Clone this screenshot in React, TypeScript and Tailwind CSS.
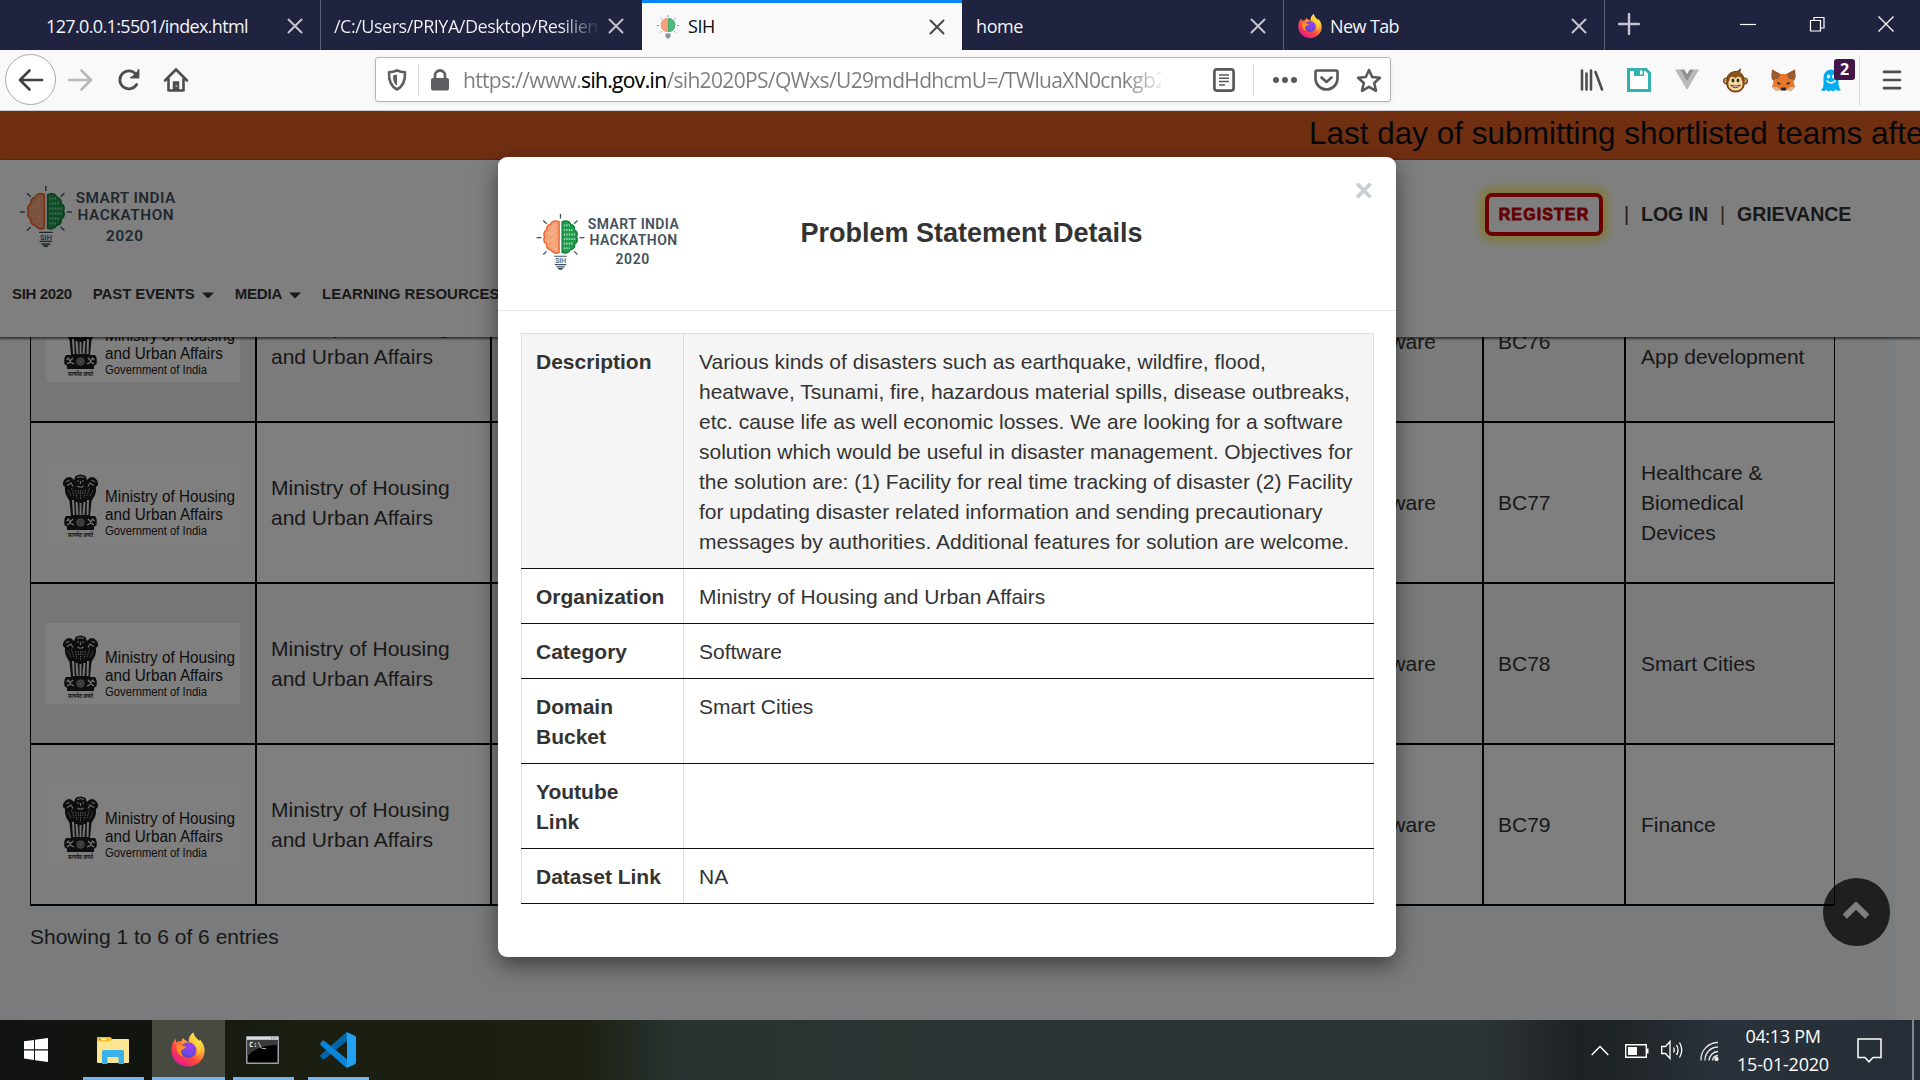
import React from "react";

const ui = "font-['Open_Sans','Noto_Sans',sans-serif]";
const arial = "font-['Liberation_Sans',Arial,sans-serif]";

function SihLogo({ className }: { className?: string }) {
  const rays = [
    "M1.7 27H7", "M48.7 27H54", "M27.8 1V6", "M9 8.3L12.7 11.8", "M46.4 8.3L42.7 11.8",
    "M9 45.4L12.7 42", "M46.4 45.4L42.7 42",
  ];
  return (
    <svg viewBox="0 0 158 64" className={className}>
      <path d="M26.3 9.6C22 7.6 18 9.2 17 12.4C13.5 13 12.3 16 13 18.4C9.6 20 9 23.6 10.6 26C8.8 29 9.8 32.6 12.6 34C12.4 37.8 14.6 40 17.4 40.4C19 43.6 23 44.8 26.3 43.2Z" fill="#f5a379" stroke="#ec6a35" strokeWidth="1.7" />
      <path d="M23 13L19 17L22 20L16 25M23 24L18 30L22 34L18 37M14 21L17 22M13 30L16 32M23 38V41" stroke="#fbd0b6" strokeWidth=".7" fill="none" />
      <path d="M29.6 9.6C34 7.6 38 9.2 39 12.4C42.5 13 43.7 16 43 18.4C46.4 20 47 23.6 45.4 26C47.2 29 46.2 32.6 43.4 34C43.6 37.8 41.4 40 38.6 40.4C37 43.6 33 44.8 29.6 43.2Z" fill="#1f9a4c" stroke="#14813a" strokeWidth="1.5" />
      <path d="M31.500 13.500H38M31.500 18.500H42M31.500 23.500H44M31.500 28.500H44M31.500 33.500H42M31.500 38.500H38" stroke="#a5dcb8" strokeWidth="2.200" strokeDasharray="1.400 1.300" />
      {rays.map((d) => (
        <path key={d} d={d} stroke="#3f525e" strokeWidth="1.400" />
      ))}
      <path d="M21 47.3H34.8M21.6 56.4H34M23.4 59H32.4" stroke="#3f525e" strokeWidth="1.3" />
      <path d="M24.6 60.2H31L29.4 62H26.2Z" fill="#3f525e" />
      <text x="22" y="55" fontFamily="Roboto" fontSize="8" fontWeight="500" fill="#3f525e" textLength="12" lengthAdjust="spacingAndGlyphs">SIH</text>
      <g fontFamily="Roboto" fontWeight="600" fill="#3f525e">
        <text x="57.800" y="17.800" fontSize="15.300" textLength="99.400" lengthAdjust="spacing">SMART INDIA</text>
        <text x="59.600" y="35" fontSize="15.300" textLength="96" lengthAdjust="spacing">HACKATHON</text>
        <text x="88" y="56" fontSize="15.300" textLength="37" lengthAdjust="spacing">2020</text>
      </g>
    </svg>
  );
}

function Bulb() {
  return (
    <svg viewBox="0 0 22 24" className="h-6 w-[22px]">
      <path d="M10.4 3.5C6 3.5 4 7 4.2 10.5C4.3 14 7 16.6 10.4 16.8Z" fill="#f6a27a" stroke="#ee9a70" />
      <path d="M11.6 3.5C16 3.5 18 7 17.8 10.5C17.7 14 15 16.6 11.6 16.8Z" fill="#4fbb7e" stroke="#38a868" />
      <path d="M8.5 18.5H13.5V21.5L12 23.4H10L8.5 21.5Z" fill="#8694a0" />
      <path d="M11 0V2M0 10.5H2M20 10.5H22M3.4 3L4.8 4.4M18.6 3L17.2 4.4M3.4 17.6L4.8 16.2M18.6 17.6L17.2 16.2" stroke="#8a969e" />
    </svg>
  );
}

function Firefox({ className, id }: { className?: string; id: string }) {
  return (
    <svg viewBox="0 0 34 34" className={className}>
      <defs>
        <linearGradient id={id + "a"} x1=".85" y1=".1" x2=".25" y2=".95">
          <stop offset="0" stopColor="#fff44f" />
          <stop offset=".35" stopColor="#ffa436" />
          <stop offset=".65" stopColor="#ff4a3c" />
          <stop offset="1" stopColor="#e5188e" />
        </linearGradient>
        <radialGradient id={id + "b"} cx=".6" cy=".3" r=".8">
          <stop offset="0" stopColor="#a23af5" />
          <stop offset=".6" stopColor="#6b4be0" />
          <stop offset="1" stopColor="#4a3fb8" />
        </radialGradient>
        <linearGradient id={id + "c"} x1="1" y1="0" x2="0" y2="1">
          <stop offset="0" stopColor="#fff24a" />
          <stop offset="1" stopColor="#ffb02e" stopOpacity=".2" />
        </linearGradient>
      </defs>
      <path d="M4.8 6C4.6 7.6 4.8 8.8 5.4 10C6.8 8.8 8.5 8.6 10.5 8.8L11.5 5.6C13.5 7.4 16 9 18 9.6C17 6 19.5 2 22.5 0C22.7 4 26 6 28.2 8.6L29 7C32 10.5 34 14.6 33.6 19C33 27.6 26 34 17 34C8 34 .8 27.5 .4 18.5C.2 13.5 2 9 4.8 6Z" fill={"url(#" + id + "a)"} />
      <circle cx="17.5" cy="17.6" r="7.8" fill={"url(#" + id + "b)"} />
      <path d="M5.5 13C9.5 11.6 12 14.4 15.6 14C14.6 16 11.5 16.4 10.2 18.2C9.6 20.5 11 23 12.4 24C8 23 5.2 18.5 5.5 13Z" fill="#ff9326" />
      <path d="M18 9.6C17 6 19.5 2 22.5 0C22.7 4 26 6 28.2 8.6C31 13 30.5 20 26 24C27.5 18 25 12 18 9.6Z" fill={"url(#" + id + "c)"} />
    </svg>
  );
}

function X({ color = "#c3c4ce", size = 16, w = 2 }: { color?: string; size?: number; w?: number }) {
  return (
    <svg width={size} height={size} viewBox="0 0 16 16" className="shrink-0">
      <path d="M1.5 1.5L14.5 14.5M14.5 1.5L1.5 14.5" stroke={color} strokeWidth={w} strokeLinecap="round" />
    </svg>
  );
}

function TabBar() {
  return (
    <div className={"flex h-[50px] shrink-0 bg-[#20233f] text-[18px] text-[#f4f4f8] " + ui}>
      <div className="flex w-[321px] items-center border-r border-[#5d5f78] pr-[17px] pl-[46px] pt-[2px]">
        <span className="flex-1 whitespace-nowrap tracking-[-0.64px]">127.0.0.1:5501/index.html</span>
        <X />
      </div>
      <div className="flex w-[321px] items-center pr-[18px] pl-[13px] pt-[2px]">
        <span className="mr-[7px] flex-1 overflow-hidden bg-gradient-to-r from-[#f4f4f8] from-85% to-[#20233f] bg-clip-text whitespace-nowrap tracking-[-0.48px] text-transparent">
          /C:/Users/PRIYA/Desktop/Resilien
        </span>
        <X />
      </div>
      <div className="flex w-80 items-center border-t-[3px] border-[#0a84ff] bg-[#f9f9fa] pr-[17px] pl-[15px] text-[#0c0c0d]">
        <Bulb />
        <span className="ml-[9px] flex-1 tracking-[-0.4px]">SIH</span>
        <X color="#48484a" />
      </div>
      <div className="flex w-[322px] items-center border-r border-[#5d5f78] pr-[17px] pl-[14px] pt-[2px]">
        <span className="flex-1 tracking-[-0.4px]">home</span>
        <X />
      </div>
      <div className="flex w-[321px] items-center border-r border-[#5d5f78] pr-[17px] pl-[14px] pt-[2px]">
        <Firefox id="ft" className="h-6 w-6" />
        <span className="ml-[8px] flex-1 tracking-[-0.6px]">New Tab</span>
        <X />
      </div>
      <div className="flex flex-1 items-center pb-[2px] pl-[13px]">
        <svg width="22" height="22" viewBox="0 0 22 22">
          <path d="M11 1V21M1 11H21" stroke="#c3c4ce" strokeWidth="2.4" strokeLinecap="round" />
        </svg>
        <svg width="16" height="16" viewBox="0 0 16 16" className="ml-[100px]">
          <path d="M0 8.5H16" stroke="#fff" strokeWidth="1.2" />
        </svg>
        <svg width="16" height="16" viewBox="0 0 16 16" className="ml-[53px]">
          <path d="M1.5 4.5H11.5V15H1.5ZM5 4.5V1.5H15V12H11.5" stroke="#fff" fill="none" strokeWidth="1.2" />
        </svg>
        <svg width="16" height="16" viewBox="0 0 16 16" className="ml-[53px]">
          <path d="M.5 .5L15.5 15.5M15.5 .5L.5 15.5" stroke="#fff" strokeWidth="1.3" />
        </svg>
      </div>
    </div>
  );
}

const gray = "#4e4e50";
function Toolbar() {
  return (
    <div className={"flex h-[61px] shrink-0 items-center border-b border-[#ccc] bg-[#f9f9fa] " + ui}>
      <div className="mb-px ml-[5px] flex h-[51px] w-[51px] items-center justify-center rounded-full border border-[#aaa] bg-white">
        <svg width="26" height="24" viewBox="0 0 26 24" fill="none" stroke="#3f3f41" strokeWidth="2.600" strokeLinecap="round" strokeLinejoin="round">
          <path d="M2 12H24M11.5 2.5L2 12L11.5 21.500" />
        </svg>
      </div>
      <svg width="26" height="24" viewBox="0 0 26 24" fill="none" stroke="#b8b8ba" strokeWidth="2.6" strokeLinecap="round" strokeLinejoin="round" className="mb-px ml-[11px]">
        <path d="M2 12H24M14.500 2.500L24 12L14.500 21.500" />
      </svg>
      <svg width="24" height="24" viewBox="0 0 24 24" fill="none" stroke={gray} strokeWidth="2.8" strokeLinecap="round" className="mb-px ml-[24px]">
        <path d="M19.600 16.500A9 9 0 1 1 18.500 5.800" />
        <path d="M21.500 2V9.500H14" strokeLinejoin="round" fill={gray} strokeWidth="1.800" />
      </svg>
      <svg width="26" height="26" viewBox="0 0 26 26" fill="none" stroke={gray} strokeWidth="2.600" strokeLinecap="round" strokeLinejoin="round" className="mb-px ml-[22px]">
        <path d="M2 13.500L13 2.500L24 13.500M5.500 12V23.500H20.500V12" />
        <path d="M10.500 23V15H15.500V23" fill={gray} strokeWidth="1.500" />
        <path d="M13 19H14" stroke="#f9f9fa" strokeWidth="1" />
      </svg>
      <div className="mb-px ml-[186px] flex h-[45px] w-[1016px] items-center rounded-[3px] border border-[#b5b5b8] bg-white pt-px shadow-[0_1px_4px_rgba(0,0,0,0.08)]">
        <svg width="20" height="22" viewBox="0 0 20 22" className="ml-[11px]">
          <path d="M10 1.500C7 2.800 4.500 3.200 2 3.200C1.700 11 3 17 10 20.500C17 17 18.300 11 18 3.200C15.500 3.200 13 2.800 10 1.500Z" fill="none" stroke="#5f5f61" strokeWidth="2.600" strokeLinejoin="round" />
          <path d="M10 5.500C8.500 6 7.300 6.300 6 6.400C6 11 6.800 14.300 10 16.500Z" fill="#5f5f61" />
        </svg>
        <div className="ml-[11px] h-8 w-px bg-[#dcdcde]" />
        <svg width="20" height="22" viewBox="0 0 20 22" className="ml-[11px]">
          <rect x="1" y="9" width="18" height="12.500" rx="2" fill="#5f5f61" />
          <path d="M5 10V6.500A5 5 0 0 1 15 6.500V10" fill="none" stroke="#5f5f61" strokeWidth="2.800" />
        </svg>
        <div className="ml-[13px] w-[698px] overflow-hidden pt-px text-[21px] whitespace-nowrap tracking-[-0.66px]">
          <span className="bg-gradient-to-r from-[#7c7c80] from-94% to-transparent to-100% bg-clip-text text-transparent">
            https://www.<span className="text-[#0c0c0d]">sih.gov.in</span>/sih2020PS/QWxs/U29mdHdhcmU=/TWluaXN0cnkgb2
          </span>
        </div>
        <svg width="22" height="24" viewBox="0 0 22 24" className="ml-[52px]">
          <rect x="1.400" y="1.400" width="19.200" height="21.200" rx="2.500" fill="none" stroke="#58585a" strokeWidth="2.700" />
          <path d="M6 7H16M6 10.300H16M6 13.600H16M6 17H12" stroke="#58585a" strokeWidth="1.500" />
        </svg>
        <div className="ml-[18px] h-8 w-px bg-[#dcdcde]" />
        <svg width="26" height="8" viewBox="0 0 26 8" fill="#58585a" className="ml-[18px]">
          <circle cx="4" cy="4" r="3" /><circle cx="13" cy="4" r="3" /><circle cx="22" cy="4" r="3" />
        </svg>
        <svg width="25" height="22" viewBox="0 0 25 22" fill="none" stroke="#58585a" strokeWidth="2.600" strokeLinecap="round" strokeLinejoin="round" className="ml-[16px]">
          <path d="M3 1.500H22Q23.500 1.500 23.500 3V9.500A11 11 0 0 1 1.500 9.500V3Q1.500 1.500 3 1.500Z" />
          <path d="M7.500 8.500L12.500 13L17.500 8.500" />
        </svg>
        <svg width="26" height="25" viewBox="0 0 26 25" fill="none" stroke="#58585a" strokeWidth="2.500" strokeLinejoin="round" className="ml-[17px]">
          <path d="M13 2L16.200 9L24 9.800L18.200 15L20 22.800L13 18.800L6 22.800L7.800 15L2 9.800L9.800 9Z" />
        </svg>
      </div>
      <svg width="24" height="22" viewBox="0 0 24 22" stroke={gray} strokeWidth="2.600" strokeLinecap="round" className="ml-[189px]">
        <path d="M2 1.500V20.500M6.500 4.500V20.500M11 1.500V20.500M15.500 3L22 20.500" />
      </svg>
      <svg width="24" height="24" viewBox="0 0 24 24" className="ml-[23px]">
        <path d="M1.500 1.500H19L22.500 5V22.500H1.500Z" fill="#fff" stroke="#33b1b1" strokeWidth="3" />
        <path d="M7 1H17V8H7Z" fill="#33b1b1" /><path d="M13 2.500H15.500V6.500H13Z" fill="#fff" />
      </svg>
      <svg width="24" height="22" viewBox="0 0 24 22" className="ml-[24px]">
        <path d="M0 .5H5L12 12.500L19 .5H24L12 21Z" fill="#b9b9b9" />
        <path d="M5 .5H9.300L12 5.200L14.700 .5H19L12 12.500Z" fill="#919191" />
      </svg>
      <svg width="25" height="25" viewBox="0 0 25 25" className="ml-[24px]">
        <circle cx="3.600" cy="13" r="3" fill="#d99b58" stroke="#69400f" strokeWidth="1.200" />
        <circle cx="21.400" cy="13" r="3" fill="#d99b58" stroke="#69400f" strokeWidth="1.200" />
        <path d="M4 11C4 6 9 3.500 13 3.500C15 3.500 16 2 17.500 1C17 3 17 4 16.500 4.500C20 6 21.500 10 21 14C22 20 18 24 12.500 24C7 24 3 20 4 14Z" fill="#8a531b" stroke="#5e370b" />
        <path d="M6.500 12C6.500 8 11 8 12.500 10.500C14 8 18.500 8 18.500 12C21 16 19.500 22.500 12.500 22.500C5.500 22.500 4 16 6.500 12Z" fill="#f8d9a0" />
        <ellipse cx="10" cy="12.500" rx="1.400" ry="1.900" fill="#1d3a24" /><ellipse cx="15" cy="12.500" rx="1.400" ry="1.900" fill="#1d3a24" />
        <path d="M7.500 17C10 20.500 15 20.500 17.500 17C14 18.300 11 18.300 7.500 17Z" fill="#fff" stroke="#8c2c18" />
      </svg>
      <svg width="25" height="23" viewBox="0 0 25 23" className="ml-[23px]">
        <path d="M1 .5L9.500 5H15.500L24 .5L24.500 8L22.500 13L24 18L20 22L15 20.500H10L5 22L1 18L2.500 13L.5 8Z" fill="#e8772e" />
        <path d="M1 .5L9.500 5L7.500 9.500L1.500 11L.5 8ZM24 .5L15.500 5L17.500 9.500L23.500 11L24.500 8Z" fill="#9a5a33" />
        <path d="M6 12.500L10 14.500L8.500 15.800L6.500 15ZM19 12.500L15 14.500L16.500 15.800L18.500 15Z" fill="#2b3947" />
        <path d="M10.500 18.500H14.500L15.500 21.500H9.500Z" fill="#20242c" /><path d="M5 22L1 18H6L9.500 21ZM20 22L24 18H19L15.500 21Z" fill="#d9b79f" />
      </svg>
      <div className="relative ml-[25px] h-[23px] w-5">
        <svg width="20" height="23" viewBox="0 0 20 23">
          <path d="M2.500 9C2.500 4 6 .5 10 .5S17.500 4 17.500 9V15C17.800 18 18.500 19.500 20 21C18 22.300 16 22 14.500 20.500C13 23 11 22.800 10 21C8.500 22.800 6.500 23 5.500 20.500C4 22.300 1.500 22.300 0 21C2 19.500 2.500 18 2.500 15Z" fill="#00aef0" />
          <ellipse cx="7.500" cy="7.500" rx="1.500" ry="2" fill="#fff" /><ellipse cx="12.500" cy="7.500" rx="1.500" ry="2" fill="#fff" />
          <path d="M5.500 11.500Q10 16.500 14.500 11.500" stroke="#fff" strokeWidth="1.500" fill="none" />
        </svg>
        <div className="absolute -top-[10px] left-[13px] flex h-[21px] w-[21px] items-center justify-center rounded-[3px] bg-[#43164a] text-[16px] leading-none font-bold text-white">2</div>
      </div>
      <div className="ml-[18px] h-[51px] w-px bg-[#dadadc]" />
      <svg width="20" height="20" viewBox="0 0 20 20" stroke={gray} strokeWidth="2.700" strokeLinecap="round" className="ml-[22px]">
        <path d="M2 1.800H18M2 10H18M2 18.200H18" />
      </svg>
    </div>
  );
}

function MinistryLogo() {
  return (
    <svg width="194" height="81" viewBox="0 0 194 81" className="shrink-0 bg-[#fffffe]">
      <path d="M29.500 14Q34.500 11 39.500 14L41 18Q44 14 48 15.500Q52.500 18 52 23L50 25Q50.500 29 49 33L45.500 39L44 54H49Q51.500 57 50.500 63L48 65V68H21V65L18.500 63Q17.500 57 20 54H25L23.500 39L20 33Q18.500 29 19 25L17 23Q16.500 18 21 15.500Q25 14 28 18Z" fill="#1d1d1d" />
      <path d="M31 15.500Q34.500 14 38 15.500M31 19H33M36 19H38M31.500 24Q34.500 26.500 37.500 24M34.500 19V22M20 19.500L23.500 18.500M49 19.500L45.500 18.500M21 23.500L25 21L27 24.500M48 23.500L44 21L42 24.500" stroke="#d8d8d8" strokeWidth="1.200" fill="none" />
      <path d="M22 28L25 34M25.500 26L28 34M29.500 28L31 36M34.500 28V37M39.500 28L38 36M43.500 26L41 34M47 28L44 34M32 28L33 33M37 28L36 33" stroke="#a8a8a8" strokeWidth="1" strokeDasharray="1.500 1" />
      <path d="M27 38L28 53M30.500 40L31.500 53M34.500 41V53M38.500 40L37.500 53M42 38L41.500 53" stroke="#efefef" strokeWidth="2" />
      <path d="M29 42V52M33 42V52M36 42V52M40 42V52" stroke="#555" strokeWidth=".7" />
      <circle cx="34.500" cy="60.500" r="4.600" fill="#8a8a8a" stroke="#222" />
      <circle cx="34.500" cy="60.500" r="2.200" fill="none" stroke="#555" strokeWidth=".8" />
      <path d="M20.500 59L22.500 57L24 60L27 57M21 63L24 61L28 63M48.500 59L46.500 57L45 60L42 57M48 63L45 61L41 63" stroke="#eee" strokeWidth="1.200" fill="none" />
      <text x="22" y="74.500" fontFamily="Noto Sans, sans-serif" fontSize="5.500" fontWeight="700" fill="#333" textLength="25" lengthAdjust="spacingAndGlyphs">सत्यमेव जयते</text>
      <g fontFamily="Liberation Sans, Arial, sans-serif" fill="#1a1a1a">
        <text x="59" y="39.700" fontSize="15.600" textLength="130" lengthAdjust="spacingAndGlyphs">Ministry of Housing</text>
        <text x="59" y="58" fontSize="15.600" textLength="118" lengthAdjust="spacingAndGlyphs">and Urban Affairs</text>
        <text x="59" y="73.300" fontSize="12.200" textLength="102" lengthAdjust="spacingAndGlyphs">Government of India</text>
      </g>
    </svg>
  );
}

const rows = [
  { code: "BC76", domain: ["Web and Mobile", "App development"], odd: true },
  { code: "BC77", domain: ["Healthcare &", "Biomedical", "Devices"], odd: false },
  { code: "BC78", domain: ["Smart Cities"], odd: true },
  { code: "BC79", domain: ["Finance"], odd: false },
];

function Entries() {
  return (
    <div className="flex h-[683px] overflow-hidden">
      <div className="w-[1895px] bg-[#f4f6f9] pl-[30px]">
        <div className="-mt-[75px] w-[1805px] border-l border-black">
          {rows.map((r) => (
            <div key={r.code} className={"flex h-[161px] border-b-2 border-black " + (r.odd ? "bg-[#f6f6f6]" : "bg-white")}>
              <div className={"flex w-[226px] items-center border-r-2 border-black pl-[15px] " + (r.odd ? "bg-[#ededed]" : "bg-[#fcfcfc]")}>
                <MinistryLogo />
              </div>
              <div className="flex w-[235px] flex-col justify-center border-r-2 border-black pl-[14px] leading-[30px]">
                <span>Ministry of Housing</span>
                <span>and Urban Affairs</span>
              </div>
              <div className="w-[846px] border-r-2 border-black" />
              <div className="flex w-[146px] items-center border-r-2 border-black pl-[15px]">Software</div>
              <div className="flex w-[142px] items-center border-r-2 border-black pl-[14px]">{r.code}</div>
              <div className="flex w-[209px] flex-col justify-center border-r border-black pl-[15px] leading-[30px]">
                {r.domain.map((d) => (
                  <span key={d}>{d}</span>
                ))}
              </div>
            </div>
          ))}
        </div>
        <div className="mt-4 leading-[30px]">Showing 1 to 6 of 6 entries</div>
      </div>
      <div className="flex-1 bg-white" />
    </div>
  );
}

function Caret() {
  return (
    <svg width="12" height="7" viewBox="0 0 12 7" className="mt-[2px] ml-[7px]">
      <path d="M0 .5H12L6 6.500Z" fill="#333" />
    </svg>
  );
}

function SiteHeader() {
  return (
    <>
      <div className="flex h-[49px] shrink-0 items-center overflow-hidden bg-[#e25f24] pb-[3px] pl-[1309px] text-[31.5px] whitespace-nowrap text-[#0b0f18]">
        Last day of submitting shortlisted teams after
      </div>
      <div className="relative z-10 flex h-[177px] shrink-0 flex-col bg-white shadow-[0_1px_2px_1px_rgba(0,0,0,0.55)]">
        <div className="flex h-[100px] items-start pl-[18px]">
          <SihLogo className="mt-[25px] h-[64px] w-[158px]" />
          <div className="mt-[33px] ml-[1309px] flex h-[43px] w-[118px] items-center justify-center rounded-[7px] border-4 border-[#d60000] text-[16px] font-bold text-[#c80000] shadow-[0_0_8px_5px_rgba(255,240,60,0.75)]">
            <span className="tracking-[1.1px] [-webkit-text-stroke:0.8px_#c80000]">REGISTER</span>
          </div>
          <div className="mt-[39px] ml-[21px] flex items-center text-[19.6px] leading-[30px] font-bold">
            <span className="font-normal">|</span>
            <span className="ml-[12px] tracking-[-0.1px]">LOG IN</span>
            <span className="ml-[12px] font-normal text-[#5a4a20]">|</span>
            <span className="ml-[12px] tracking-[-0.1px]">GRIEVANCE</span>
          </div>
        </div>
        <div className="flex h-[67px] items-center pt-[1px] pl-3 text-[15px] font-bold">
          <span className="tracking-[-0.35px]">SIH 2020</span>
          <span className="ml-[21px] flex items-center tracking-[-0.1px]">PAST EVENTS<Caret /></span>
          <span className="ml-[21px] flex items-center tracking-[-0.2px]">MEDIA<Caret /></span>
          <span className="ml-[21px] flex items-center whitespace-nowrap">LEARNING RESOURCES</span>
        </div>
      </div>
    </>
  );
}

const details: { label: string[]; value: string[]; shade?: boolean }[] = [
  {
    label: ["Description"],
    shade: true,
    value: [
      "Various kinds of disasters such as earthquake, wildfire, flood,",
      "heatwave, Tsunami, fire, hazardous material spills, disease outbreaks,",
      "etc. cause life as well economic losses. We are looking for a software",
      "solution which would be useful in disaster management. Objectives for",
      "the solution are: (1) Facility for real time tracking of disaster (2) Facility",
      "for updating disaster related information and sending precautionary",
      "messages by authorities. Additional features for solution are welcome.",
    ],
  },
  { label: ["Organization"], value: ["Ministry of Housing and Urban Affairs"] },
  { label: ["Category"], value: ["Software"] },
  { label: ["Domain", "Bucket"], value: ["Smart Cities"] },
  { label: ["Youtube", "Link"], value: [] },
  { label: ["Dataset Link"], value: ["NA"] },
];

function Modal() {
  return (
    <div className="h-[800px] w-[898px] rounded-[9px] bg-white shadow-[0_8px_23px_rgba(0,0,0,0.5)]">
      <div className="flex h-[154px] items-start border-b border-[#e5e5e5] pl-[37px]">
        <SihLogo className="mt-[55.500px] h-[58.500px] w-[144.500px] shrink-0" />
        <h4 className="mt-[57px] ml-[121px] w-[554px] text-[27px] leading-[38px] font-bold">Problem Statement Details</h4>
        <span className="mt-[18px] text-[31.5px] leading-[31.500px] font-bold text-[#ccc]">×</span>
      </div>
      <div className="mt-[22px] ml-[23px] w-[853px] border-t border-[#ddd] leading-[30px]">
        {details.map((d) => (
          <div key={d.label[0]} className={"border-b border-[#111] " + (d.shade ? "bg-[#f5f5f5]" : "bg-white")}>
            <div className="flex border-x border-[#ddd]">
              <div className="flex w-[162px] flex-col border-r border-[#ddd] pt-[13px] pb-[11px] pl-[14px] font-bold">
                {d.label.map((t) => (
                  <span key={t}>{t}</span>
                ))}
              </div>
              <div className="flex flex-1 flex-col pt-[13px] pb-[11px] pl-[15px] whitespace-nowrap">
                {d.value.map((t) => (
                  <span key={t}>{t}</span>
                ))}
              </div>
            </div>
          </div>
        ))}
      </div>
    </div>
  );
}

function Taskbar() {
  return (
    <div className={"flex h-[60px] shrink-0 bg-[linear-gradient(90deg,#10130f_0px,#12150f_140px,#1a1f12_300px,#1b2012_580px,#2a3331_680px,#2c3336_1100px,#2d3438_1480px,#1d2123_1580px,#1f2426_1620px,#29313a_1720px,#262d37_1920px)] text-[18px] text-white " + ui}>
      <div className="flex w-[83px] items-center pl-6">
        <svg width="24" height="24" viewBox="0 0 24 24" fill="#fff">
          <path d="M0 3.300L10 1.900V11.300H0ZM11 1.700L24 0V11.300H11ZM0 12.400H10V21.900L0 20.600ZM11 12.400H24V24L11 22.200Z" />
        </svg>
      </div>
      <div className="flex w-[61px] items-center border-b-[3px] border-[#76b5ec] pt-[3px] pl-[14px]">
        <svg width="32" height="27" viewBox="0 0 32 27">
          <path d="M0 1.500Q0 0 1.500 0H13L15 2H31Q32 2 32 3V25Q32 26 31 26H1Q0 26 0 25Z" fill="#fee591" />
          <path d="M0 1.500Q0 0 1.500 0H13L15 2.500L13 4.500H0Z" fill="#f5c02f" /><path d="M2 1.800H9V3H2Z" fill="#fff" /><path d="M2 1.800H4V3H2Z" fill="#35a3df" />
          <path d="M5 27V15Q5 13 7 13H25Q27 13 27 15V27H21.500V20H10.500V27Z" fill="#38b2e8" />
        </svg>
      </div>
      <div className="ml-2 flex w-[73px] items-center border-b-[3px] border-[#76b5ec] bg-[#474a41] pt-[2px] pl-[19px]">
        <Firefox id="fb" className="h-[35px] w-[34px]" />
      </div>
      <div className="ml-2 flex w-[61px] items-center border-b-[3px] border-[#76b5ec] pt-[2px] pl-[13px]">
        <svg width="33" height="28" viewBox="0 0 33 28">
          <rect width="33" height="28" rx="1" fill="#9aa1a8" /><rect x="1" y="1" width="31" height="2.500" fill="#d8dde2" />
          <path d="M25 2H31" stroke="#5a6f86" strokeDasharray="1.200 .8" />
          <rect x="1.500" y="4" width="30" height="22.500" fill="#000" />
          <path d="M1.500 4H31.500V9Q12 9 1.500 20Z" fill="#3a3a3a" />
          <text x="3" y="10.500" fontFamily="DejaVu Sans Mono" fontSize="7" fontWeight="700" fill="#eee">C:\_</text>
        </svg>
      </div>
      <div className="ml-[14px] flex w-[61px] items-center border-b-[3px] border-[#76b5ec] pt-[3px] pl-3">
        <svg width="36" height="36" viewBox="0 0 36 36">
          <path d="M1 25.500Q-.5 24 1 22.500L26.500 0L28 8L4.500 27Q3 28 2 26.800Z" fill="#0065a9" />
          <path d="M1 10.500Q-.5 12 1 13.500L26.500 36L28 28L4.500 9Q3 8 2 9.200Z" fill="#0a84d6" />
          <path d="M26.500 0L34.500 3.500Q36 4.200 36 6V30Q36 31.800 34.500 32.500L26.500 36L27 27V9Z" fill="#22a3f1" />
        </svg>
      </div>
      <div className="flex flex-1 items-center justify-end">
        <svg width="18" height="11" viewBox="0 0 18 11" fill="none" stroke="#fff" strokeWidth="1.500"><path d="M.7 10L9 1.500L17.300 10" /></svg>
        <svg width="24" height="14" viewBox="0 0 24 14" className="mt-px ml-[16px]">
          <path d="M.7 .7H21.300V13.300H.7Z" fill="none" stroke="#fff" strokeWidth="1.400" /><path d="M3 3H12V11H3ZM21.500 4.500H23.500V9.500H21.500Z" fill="#fff" />
        </svg>
        <svg width="23" height="20" viewBox="0 0 23 20" fill="none" stroke="#fff" strokeWidth="1.300" className="ml-[12px]">
          <path d="M.7 6.500H4.500L9 1.500V18.500L4.500 13.500H.7Z" /><path d="M12.500 7.500Q14 10 12.500 12.500M15.500 5Q18.500 10 15.500 15M18.500 2.500Q23 10 18.500 17.500" />
        </svg>
        <svg width="19" height="20" viewBox="0 0 19 20" fill="none" stroke="#e8e8e8" strokeWidth="1.300" className="mt-[2px] ml-[16px]">
          <path d="M1 19.500A17 17 0 0 1 18 1.500M5 19.500A13 13 0 0 1 18 6M9 19.500A9.500 9.500 0 0 1 18 10.500M12.500 19.500A6 6 0 0 1 18 14.500" /><circle cx="16.500" cy="18" r="1.500" fill="#fff" />
        </svg>
        <div className="ml-[17px] flex w-[94px] flex-col text-center leading-[28px] whitespace-nowrap">
          <span className="tracking-[-0.3px]">04:13 PM</span>
          <span className="tracking-[-0.2px]">15-01-2020</span>
        </div>
        <svg width="25" height="25" viewBox="0 0 25 25" fill="none" stroke="#fff" strokeWidth="1.500" className="ml-[27px]">
          <path d="M1 1H24V19.500H16L12 23.800L8 19.500H1Z" />
        </svg>
        <div className="ml-[30px] h-full w-[2px] bg-[#80868b]" />
        <div className="w-[6px]" />
      </div>
    </div>
  );
}

export default function App() {
  return (
    <div className="flex h-[1080px] w-[1920px] flex-col overflow-hidden">
      <TabBar />
      <Toolbar />
      <div className={"relative flex h-[909px] shrink-0 flex-col overflow-hidden text-[21px] text-[#333] " + arial}>
        <SiteHeader />
        <Entries />
        <div className="absolute top-[767px] left-[1823px] z-10 flex h-[68px] w-[67px] items-center justify-center rounded-full bg-black/75">
          <svg width="28" height="19" viewBox="0 0 28 19" className="-mt-1 mr-[2px]">
            <path d="M2.800 15.500L14 4.500L25.200 15.500" fill="none" stroke="#fff" strokeWidth="6" />
          </svg>
        </div>
        <div className="absolute inset-0 z-20 bg-black/50 pt-[46px] pl-[498px]">
          <Modal />
        </div>
      </div>
      <Taskbar />
    </div>
  );
}
